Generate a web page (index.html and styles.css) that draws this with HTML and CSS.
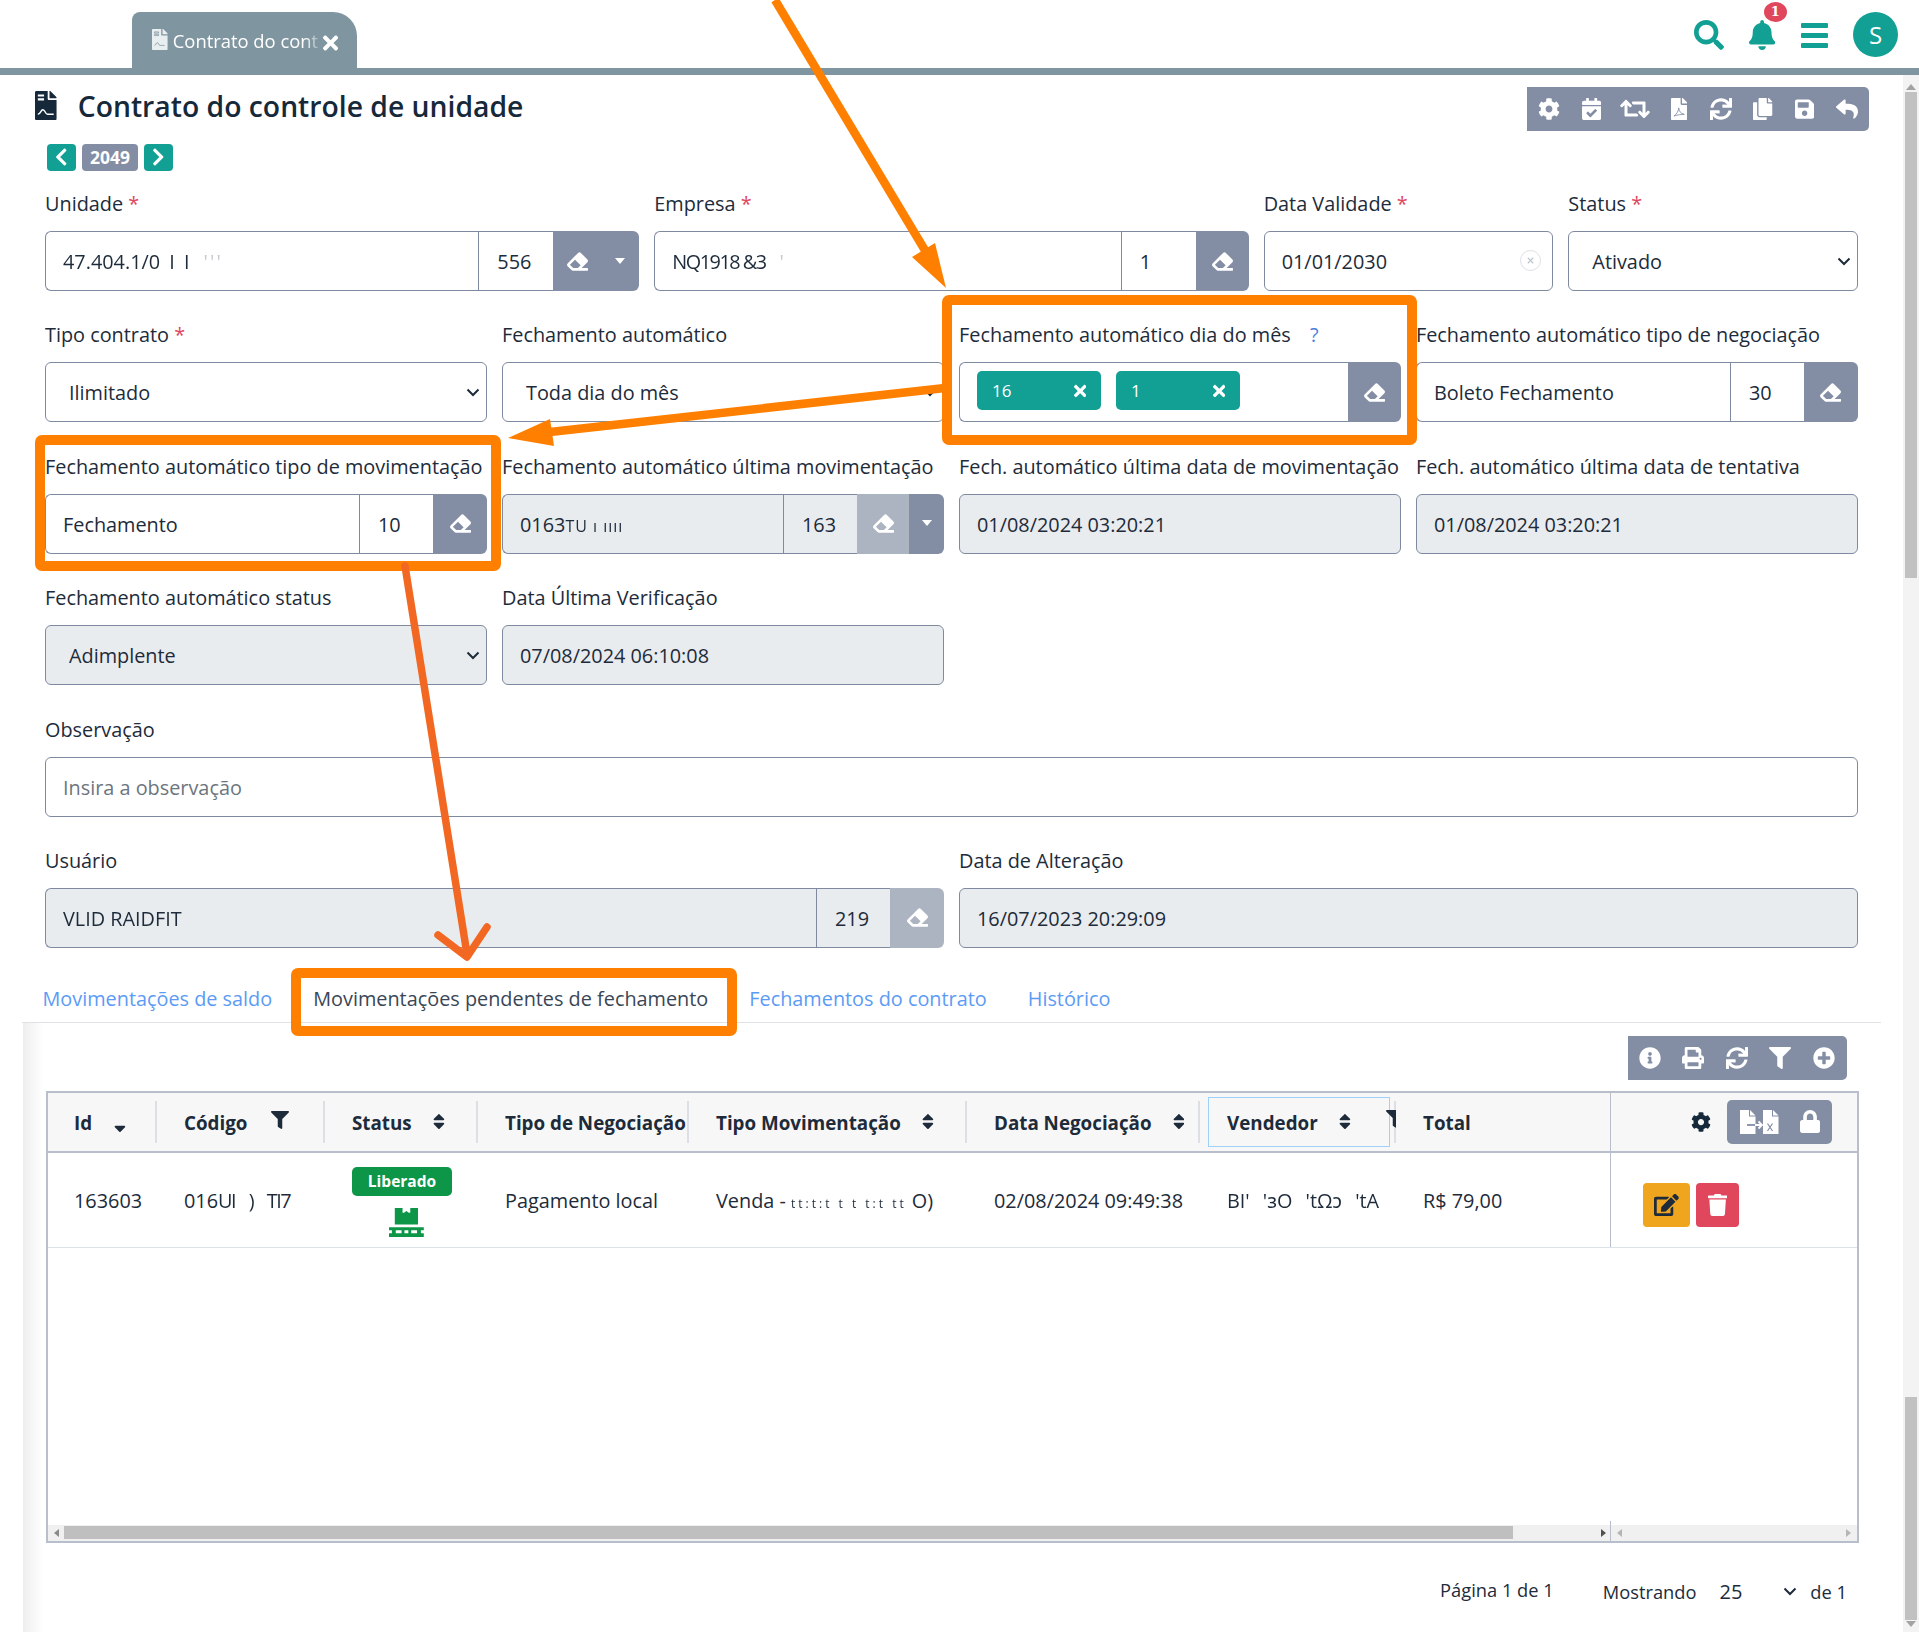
FILE: index.html
```html
<!DOCTYPE html>
<html lang="pt-BR">
<head>
<meta charset="utf-8">
<title>Contrato do controle de unidade</title>
<link rel="stylesheet" href="styles.css">
</head>
<body>
<svg class="sprite" aria-hidden="true">
  <symbol id="cog" viewBox="0 0 512 512"><path d="M487.4 315.7l-42.6-24.6c4.3-23.2 4.3-47 0-70.2l42.6-24.6c4.9-2.8 7.1-8.6 5.5-14-11.1-35.6-30-67.8-54.7-94.6-3.8-4.1-10-5.1-14.8-2.3L380.8 110c-17.9-15.4-38.5-27.3-60.8-35.1V25.8c0-5.6-3.9-10.5-9.4-11.7-36.7-8.2-74.3-7.8-109.2 0-5.5 1.2-9.4 6.1-9.4 11.7V75c-22.2 7.9-42.8 19.8-60.8 35.1L88.7 85.5c-4.9-2.8-11-1.9-14.8 2.3-24.7 26.7-43.6 58.9-54.7 94.6-1.7 5.4.6 11.2 5.5 14L67.3 221c-4.3 23.2-4.3 47 0 70.2l-42.6 24.6c-4.9 2.8-7.1 8.6-5.5 14 11.1 35.6 30 67.8 54.7 94.6 3.8 4.1 10 5.1 14.8 2.3l42.6-24.6c17.9 15.4 38.5 27.3 60.8 35.1v49.2c0 5.6 3.9 10.5 9.4 11.7 36.7 8.2 74.3 7.8 109.2 0 5.5-1.2 9.4-6.1 9.4-11.7v-49.2c22.2-7.9 42.8-19.8 60.8-35.1l42.6 24.6c4.9 2.8 11 1.9 14.8-2.3 24.7-26.7 43.6-58.9 54.7-94.6 1.5-5.5-.7-11.3-5.6-14.1zM256 336c-44.1 0-80-35.9-80-80s35.9-80 80-80 80 35.9 80 80-35.9 80-80 80z"/></symbol>
  <symbol id="sync" viewBox="0 0 512 512"><path d="M440.65 12.57l4 82.77A247.16 247.16 0 0 0 255.83 8C134.73 8 33.91 94.92 12.29 209.82A12 12 0 0 0 24.09 224h49.05a12 12 0 0 0 11.67-9.26 175.91 175.91 0 0 1 317-56.94l-101.46-4.86a12 12 0 0 0-12.57 12v47.41a12 12 0 0 0 12 12H500a12 12 0 0 0 12-12V12a12 12 0 0 0-12-12h-47.37a12 12 0 0 0-11.98 12.57zM255.83 432a175.61 175.61 0 0 1-146-77.8l101.8 4.87a12 12 0 0 0 12.57-12v-47.4a12 12 0 0 0-12-12H12a12 12 0 0 0-12 12V500a12 12 0 0 0 12 12h47.35a12 12 0 0 0 12-12.6l-4.15-82.57A247.17 247.17 0 0 0 255.83 504c121.11 0 221.93-86.92 243.55-201.82a12 12 0 0 0-11.8-14.18h-49.05a12 12 0 0 0-11.67 9.26A175.86 175.86 0 0 1 255.83 432z"/></symbol>
  <symbol id="eraser" viewBox="0 0 512 512"><path d="M497.941 273.941c18.745-18.745 18.745-49.137 0-67.882l-160-160c-18.745-18.745-49.136-18.746-67.883 0l-256 256c-18.745 18.745-18.745 49.137 0 67.882l96 96A48.004 48.004 0 0 0 144 480h356c6.627 0 12-5.373 12-12v-40c0-6.627-5.373-12-12-12H355.883l142.058-142.059zm-302.627-62.627l137.373 137.373L265.373 416H150.628l-80-80 124.686-124.686z"/></symbol>
  <symbol id="filter" viewBox="0 0 512 512"><path d="M487.976 0H24.028C2.71 0-8.047 25.866 7.058 40.971L192 225.941V432c0 7.831 3.821 15.17 10.237 19.662l80 55.98C298.02 518.69 320 507.493 320 487.98V225.941l184.947-184.97C520.021 25.896 509.338 0 487.976 0z"/></symbol>
  <symbol id="sort" viewBox="0 0 320 512"><path d="M41 288h238c21.4 0 32.1 25.9 17 41L177 448c-9.4 9.4-24.6 9.4-33.9 0L24 329c-15.1-15.1-4.4-41 17-41zm255-105L177 64c-9.4-9.4-24.6-9.4-33.9 0L24 183c-15.1 15.1-4.4 41 17 41h238c21.4 0 32.1-25.9 17-41z"/></symbol>
  <symbol id="times" viewBox="0 0 352 512"><path d="M242.72 256l100.07-100.07c12.28-12.28 12.28-32.19 0-44.48l-22.24-22.24c-12.28-12.28-32.19-12.28-44.48 0L176 189.28 75.93 89.21c-12.28-12.28-32.19-12.28-44.48 0L9.21 111.45c-12.28 12.28-12.28 32.19 0 44.48L109.28 256 9.21 356.07c-12.28 12.28-12.28 32.19 0 44.48l22.24 22.24c12.28 12.28 32.2 12.28 44.48 0L176 322.72l100.07 100.07c12.28 12.28 32.2 12.28 44.48 0l22.24-22.24c12.28-12.28 12.28-32.19 0-44.48L242.72 256z"/></symbol>
  <symbol id="file" viewBox="0 0 384 512"><path d="M224 136V0H24C10.7 0 0 10.7 0 24v464c0 13.3 10.7 24 24 24h336c13.3 0 24-10.7 24-24V160H248c-13.2 0-24-10.8-24-24zm160-14.1v6.1H256V0h6.1c6.4 0 12.5 2.5 17 7l97.9 98c4.5 4.5 7 10.6 7 16.9z"/></symbol>
  <symbol id="chev" viewBox="0 0 14 9"><path d="M1.5 1.5L7 7l5.5-5.5"/></symbol>
</svg>

<header class="topbar">
  <div class="tab-main">
    <svg class="tab-file" viewBox="0 0 384 512"><use href="#file"/><path class="mark" d="M60 70h100v30H60zM60 130h100v30H60zM60 400c40 0 40-70 70-70s30 70 60 70h120"/></svg>
    <span class="tab-title">Contrato do cont</span>
    <svg class="tab-close" viewBox="0 0 352 512"><use href="#times"/></svg>
  </div>
  <div class="top-icons">
    <svg class="ti-search" viewBox="0 0 512 512"><path d="M505 442.7L405.3 343c-4.5-4.5-10.6-7-17-7H372c27.6-35.3 44-79.7 44-128C416 93.1 322.9 0 208 0S0 93.1 0 208s93.1 208 208 208c48.3 0 92.7-16.4 128-44v16.3c0 6.4 2.5 12.5 7 17l99.7 99.7c9.4 9.4 24.6 9.4 33.9 0l28.3-28.3c9.4-9.4 9.4-24.6.1-34zM208 336c-70.7 0-128-57.2-128-128 0-70.7 57.2-128 128-128 70.7 0 128 57.2 128 128 0 70.7-57.2 128-128 128z"/></svg>
    <div class="bell-wrap">
      <svg class="ti-bell" viewBox="0 0 448 512"><path d="M224 512c35.32 0 63.97-28.65 63.97-64H160.03c0 35.35 28.65 64 63.97 64zm215.39-149.71c-19.32-20.76-55.47-51.99-55.47-154.29 0-77.7-54.48-139.9-127.94-155.16V32c0-17.67-14.32-32-31.98-32s-31.98 14.33-31.98 32v20.84C118.56 68.1 64.08 130.3 64.08 208c0 102.3-36.15 133.53-55.47 154.29-6 6.45-8.66 14.16-8.61 21.71.11 16.4 12.98 32 32.1 32h383.8c19.12 0 32-15.6 32.1-32 .05-7.55-2.61-15.27-8.61-21.71z"/></svg>
      <span class="bell-badge">1</span>
    </div>
    <div class="bars"><i></i><i></i><i></i></div>
    <div class="avatar">S</div>
  </div>
</header>

<div class="shell">
  <main class="content">
    <div class="title-row">
      <h1 class="title">
        <svg class="title-icon" viewBox="0 0 384 512"><use href="#file"/><path class="mark-w" d="M50 60h110v36H50zM50 130h110v36H50z"/><path class="mark-s" d="M50 410c50 0 50-80 90-80s40 80 80 80h110"/></svg>
        <span class="title-text">Contrato do controle de unidade</span>
      </h1>
      <div class="toolbar top">
        <span class="tb"><svg class="h22" viewBox="0 0 512 512"><use href="#cog"/></svg></span>
        <span class="tb"><svg class="h22" viewBox="0 0 448 512"><path d="M436 160H12c-6.627 0-12-5.373-12-12v-36c0-26.51 21.49-48 48-48h48V12c0-6.627 5.373-12 12-12h40c6.627 0 12 5.373 12 12v52h128V12c0-6.627 5.373-12 12-12h40c6.627 0 12 5.373 12 12v52h48c26.51 0 48 21.49 48 48v36c0 6.627-5.373 12-12 12zM12 192h424c6.627 0 12 5.373 12 12v260c0 26.51-21.49 48-48 48H48c-26.51 0-48-21.49-48-48V204c0-6.627 5.373-12 12-12zm333.296 95.947l-28.169-28.398c-4.667-4.705-12.265-4.736-16.970-.068L194.12 364.665l-45.98-46.352c-4.667-4.705-12.266-4.736-16.971-.068l-28.397 28.17c-4.705 4.667-4.736 12.265-.068 16.970l82.601 83.269c4.667 4.705 12.265 4.736 16.97.068l142.953-141.805c4.705-4.667 4.736-12.265.068-16.970z"/></svg></span>
        <span class="tb wide"><svg class="h24" viewBox="0 0 640 512"><path d="M629.657 343.598L528.971 444.284c-9.373 9.372-24.568 9.372-33.941 0L394.343 343.598c-9.373-9.373-9.373-24.569 0-33.941l10.823-10.823c9.562-9.562 25.133-9.34 34.419.492L480 342.118V160H292.451a24.005 24.005 0 0 1-16.971-7.029l-16-16C244.361 121.851 255.069 96 276.451 96H520c13.255 0 24 10.745 24 24v222.118l40.416-42.792c9.285-9.831 24.856-10.054 34.419-.492l10.823 10.823c9.372 9.372 9.372 24.569-.001 33.941zm-265.138 15.431A23.999 23.999 0 0 0 347.548 352H160V169.881l40.416 42.792c9.286 9.831 24.856 10.054 34.419.491l10.822-10.822c9.373-9.373 9.373-24.569 0-33.941L144.971 67.716c-9.373-9.373-24.569-9.373-33.941 0L10.343 168.402c-9.373 9.373-9.373 24.569 0 33.941l10.822 10.822c9.562 9.562 25.133 9.34 34.419-.491L96 169.881V392c0 13.255 10.745 24 24 24h243.549c21.382 0 32.09-25.851 16.971-40.971l-16.001-16z"/></svg></span>
        <span class="tb mid"><svg class="h22" viewBox="0 0 384 512"><use href="#file"/><path class="pdf" d="M70 420c60-40 110-130 110-190 0 70 50 140 130 150-70 0-150 10-240 40z"/></svg></span>
        <span class="tb"><svg class="h22" viewBox="0 0 512 512"><use href="#sync"/></svg></span>
        <span class="tb"><svg class="h22" viewBox="0 0 448 512"><path d="M320 448v40c0 13.255-10.745 24-24 24H24c-13.255 0-24-10.745-24-24V120c0-13.255 10.745-24 24-24h72v296c0 30.879 25.121 56 56 56h168zm0-344V0H152c-13.255 0-24 10.745-24 24v368c0 13.255 10.745 24 24 24h272c13.255 0 24-10.745 24-24V128H344c-13.2 0-24-10.8-24-24zm120.971-31.029L375.029 7.029A24 24 0 0 0 358.059 0H352v96h96v-6.059a24 24 0 0 0-7.029-16.97z"/></svg></span>
        <span class="tb"><svg class="h22" viewBox="0 0 448 512"><path d="M433.941 129.941l-83.882-83.882A48 48 0 0 0 316.118 32H48C21.49 32 0 53.49 0 80v352c0 26.51 21.49 48 48 48h352c26.51 0 48-21.49 48-48V163.882a48 48 0 0 0-14.059-33.941zM224 416c-35.346 0-64-28.654-64-64 0-35.346 28.654-64 64-64s64 28.654 64 64c0 35.346-28.654 64-64 64zm96-304.52V212c0 6.627-5.373 12-12 12H76c-6.627 0-12-5.373-12-12V108c0-6.627 5.373-12 12-12h228.52c3.183 0 6.235 1.264 8.485 3.515l3.48 3.48A11.996 11.996 0 0 1 320 111.48z"/></svg></span>
        <span class="tb"><svg class="h22" viewBox="0 0 512 512"><path d="M8.309 189.836L184.313 37.851C199.719 24.546 224 35.347 224 56.015v80.053c160.629 1.839 288 34.032 288 186.258 0 61.441-39.581 122.309-83.333 154.132-13.653 9.931-33.111-2.533-28.077-18.631 45.344-145.012-21.507-183.51-176.59-185.742V360c0 20.7-24.3 31.453-39.687 18.164l-176.004-152c-11.071-9.562-11.086-26.753 0-36.328z"/></svg></span>
      </div>
    </div>

    <div class="pager">
      <span class="pg-btn"><svg class="h20" viewBox="0 0 320 512"><path d="M34.52 239.03L228.87 44.69c9.37-9.37 24.57-9.37 33.94 0l22.67 22.67c9.36 9.36 9.37 24.52.04 33.9L131.49 256l154.02 154.75c9.34 9.38 9.32 24.54-.04 33.9l-22.67 22.67c-9.37 9.37-24.57 9.37-33.94 0L34.52 272.97c-9.37-9.37-9.37-24.57 0-33.94z"/></svg></span>
      <span class="pg-num">2049</span>
      <span class="pg-btn"><svg class="h20" viewBox="0 0 320 512"><path d="M285.476 272.971L91.132 467.314c-9.373 9.373-24.569 9.373-33.941 0l-22.667-22.667c-9.357-9.357-9.375-24.522-.04-33.901L188.505 256 34.484 101.255c-9.335-9.379-9.317-24.544.04-33.901l22.667-22.667c9.373-9.373 24.569-9.373 33.941 0L285.475 239.03c9.373 9.372 9.373 24.568.001 33.941z"/></svg></span>
    </div>

    <form class="form">
      <div class="field c4">
        <label>Unidade <b>*</b></label>
        <div class="group">
          <div class="ctl grow"><span class="smudge open">47.404.1/0 I I</span><span class="smudge faint">' ' '</span></div>
          <div class="ctl code w75">556</div>
          <span class="btn w48"><svg class="er" viewBox="0 0 512 512"><use href="#eraser"/></svg></span>
          <span class="btn caret-btn w38 end"><i class="caret"></i></span>
        </div>
      </div>
      <div class="field c4">
        <label>Empresa <b>*</b></label>
        <div class="group">
          <div class="ctl grow"><span class="smudge">NQ1918 &amp;3</span><span class="smudge faint">'</span></div>
          <div class="ctl code w75">1</div>
          <span class="btn w53 end"><svg class="er" viewBox="0 0 512 512"><use href="#eraser"/></svg></span>
        </div>
      </div>
      <div class="field c2">
        <label>Data Validade <b>*</b></label>
        <div class="ctl alone date">01/01/2030<span class="clear"><svg viewBox="0 0 12 12"><path d="M3 3l6 6M9 3l-6 6"/></svg></span></div>
      </div>
      <div class="field c2">
        <label>Status <b>*</b></label>
        <div class="selwrap"><select class="sel"><option>Ativado</option></select><svg class="chev" viewBox="0 0 14 9"><use href="#chev"/></svg></div>
      </div>

      <div class="field c3">
        <label>Tipo contrato <b>*</b></label>
        <div class="selwrap"><select class="sel"><option>Ilimitado</option></select><svg class="chev" viewBox="0 0 14 9"><use href="#chev"/></svg></div>
      </div>
      <div class="field c3">
        <label>Fechamento automático</label>
        <div class="selwrap"><select class="sel"><option>Toda dia do mês</option></select><svg class="chev" viewBox="0 0 14 9"><use href="#chev"/></svg></div>
      </div>
      <div class="field c3">
        <label>Fechamento automático dia do mês <em>?</em></label>
        <div class="group">
          <div class="ctl grow chips">
            <span class="chip">16<svg viewBox="0 0 352 512"><use href="#times"/></svg></span>
            <span class="chip">1<svg viewBox="0 0 352 512"><use href="#times"/></svg></span>
          </div>
          <span class="btn w53 end"><svg class="er" viewBox="0 0 512 512"><use href="#eraser"/></svg></span>
        </div>
      </div>
      <div class="field c3">
        <label>Fechamento automático tipo de negociação</label>
        <div class="group">
          <div class="ctl grow">Boleto Fechamento</div>
          <div class="ctl code w74">30</div>
          <span class="btn w54 end"><svg class="er" viewBox="0 0 512 512"><use href="#eraser"/></svg></span>
        </div>
      </div>

      <div class="field c3">
        <label>Fechamento automático tipo de movimentação</label>
        <div class="group">
          <div class="ctl grow">Fechamento</div>
          <div class="ctl code w74">10</div>
          <span class="btn w54 end"><svg class="er" viewBox="0 0 512 512"><use href="#eraser"/></svg></span>
        </div>
      </div>
      <div class="field c3">
        <label>Fechamento automático última movimentação</label>
        <div class="group off">
          <div class="ctl grow">0163<span class="smudge short">TU ı ıııı</span></div>
          <div class="ctl code w74">163</div>
          <span class="btn dim w52"><svg class="er" viewBox="0 0 512 512"><use href="#eraser"/></svg></span>
          <span class="btn caret-btn w35 end"><i class="caret"></i></span>
        </div>
      </div>
      <div class="field c3">
        <label>Fech. automático última data de movimentação</label>
        <div class="ctl alone off">01/08/2024 03:20:21</div>
      </div>
      <div class="field c3">
        <label>Fech. automático última data de tentativa</label>
        <div class="ctl alone off">01/08/2024 03:20:21</div>
      </div>

      <div class="field c3">
        <label>Fechamento automático status</label>
        <div class="selwrap"><select class="sel off"><option>Adimplente</option></select><svg class="chev" viewBox="0 0 14 9"><use href="#chev"/></svg></div>
      </div>
      <div class="field c3">
        <label>Data Última Verificação</label>
        <div class="ctl alone off">07/08/2024 06:10:08</div>
      </div>
      <div class="field c12">
        <label>Observação</label>
        <div class="ctl alone ph">Insira a observação</div>
      </div>
      <div class="field c6">
        <label>Usuário</label>
        <div class="group off">
          <div class="ctl grow"><span class="smudge tight">VLID RAIDFIT</span></div>
          <div class="ctl code w74">219</div>
          <span class="btn dim w54 end"><svg class="er" viewBox="0 0 512 512"><use href="#eraser"/></svg></span>
        </div>
      </div>
      <div class="field c6">
        <label>Data de Alteração</label>
        <div class="ctl alone off">16/07/2023 20:29:09</div>
      </div>
    </form>

    <nav class="tabs">
      <a>Movimentações de saldo</a>
      <a class="active">Movimentações pendentes de fechamento</a>
      <a>Fechamentos do contrato</a>
      <a>Histórico</a>
    </nav>

    <section class="panel">
      <div class="toolbar sub">
        <span class="tb2"><svg class="h22" viewBox="0 0 512 512"><path d="M256 8C119.043 8 8 119.083 8 256c0 136.997 111.043 248 248 248s248-111.003 248-248C504 119.083 392.957 8 256 8zm0 110c23.196 0 42 18.804 42 42s-18.804 42-42 42-42-18.804-42-42 18.804-42 42-42zm56 254c0 6.627-5.373 12-12 12h-88c-6.627 0-12-5.373-12-12v-24c0-6.627 5.373-12 12-12h12v-64h-12c-6.627 0-12-5.373-12-12v-24c0-6.627 5.373-12 12-12h64c6.627 0 12 5.373 12 12v100h12c6.627 0 12 5.373 12 12v24z"/></svg></span>
        <span class="tb2"><svg class="h22" viewBox="0 0 512 512"><path d="M448 192V77.25c0-8.49-3.37-16.62-9.37-22.63L393.37 9.37c-6-6-14.14-9.37-22.63-9.37H96C78.33 0 64 14.33 64 32v160c-35.35 0-64 28.65-64 64v112c0 8.84 7.16 16 16 16h48v96c0 17.67 14.33 32 32 32h320c17.67 0 32-14.33 32-32v-96h48c8.84 0 16-7.16 16-16V256c0-35.35-28.65-64-64-64zm-64 256H128v-96h256v96zm0-224H128V64h192v48c0 8.84 7.16 16 16 16h48v96zm48 72c-13.25 0-24-10.75-24-24 0-13.26 10.75-24 24-24s24 10.74 24 24c0 13.25-10.75 24-24 24z"/></svg></span>
        <span class="tb2"><svg class="h22" viewBox="0 0 512 512"><use href="#sync"/></svg></span>
        <span class="tb2"><svg class="h22" viewBox="0 0 512 512"><use href="#filter"/></svg></span>
        <span class="tb2"><svg class="h22" viewBox="0 0 512 512"><path d="M256 8C119 8 8 119 8 256s111 248 248 248 248-111 248-248S393 8 256 8zm144 276c0 6.6-5.4 12-12 12h-92v92c0 6.6-5.4 12-12 12h-56c-6.6 0-12-5.4-12-12v-92h-92c-6.6 0-12-5.4-12-12v-56c0-6.6 5.4-12 12-12h92v-92c0-6.6 5.4-12 12-12h56c6.6 0 12 5.4 12 12v92h92c6.6 0 12 5.4 12 12v56z"/></svg></span>
      </div>

      <div class="grid-table">
        <div class="tr head">
          <div class="th first">Id<svg class="s-down" viewBox="0 0 320 512"><path d="M41 288h238c21.4 0 32.1 25.9 17 41L177 448c-9.4 9.4-24.6 9.4-33.9 0L24 329c-15.1-15.1-4.4-41 17-41z"/></svg></div>
          <div class="th">Código<svg class="f-ic" viewBox="0 0 512 512"><use href="#filter"/></svg></div>
          <div class="th">Status<svg class="s-ic" viewBox="0 0 320 512"><use href="#sort"/></svg></div>
          <div class="th">Tipo de Negociação</div>
          <div class="th">Tipo Movimentação<svg class="s-ic" viewBox="0 0 320 512"><use href="#sort"/></svg></div>
          <div class="th">Data Negociação<svg class="s-ic" viewBox="0 0 320 512"><use href="#sort"/></svg></div>
          <div class="th focus"><span class="focus-box"></span>Vendedor<svg class="s-ic" viewBox="0 0 320 512"><use href="#sort"/></svg><svg class="f-cut" viewBox="0 0 280 512"><path d="M487.976 0H24.028C2.71 0-8.047 25.866 7.058 40.971L192 225.941V432c0 7.831 3.821 15.17 10.237 19.662l80 55.98C298.02 518.69 320 507.493 320 487.98V225.941l184.947-184.97C520.021 25.896 509.338 0 487.976 0z"/></svg></div>
          <div class="th last">Total</div>
          <div class="th-act">
            <svg class="h20 dark" viewBox="0 0 512 512"><use href="#cog"/></svg>
            <span class="act-group">
              <svg class="xfer" viewBox="0 0 42 24">
                <path d="M1 0h9v6.5h6.5V24H1z"/><path d="M11 0l5.5 5.500H11z"/>
                <path d="M24 0h9v6.500h6.500V24H24z"/><path d="M34 0l5.500 5.500H34z"/>
                <path class="xfer-a" d="M8 15h8"/><path class="xfer-b" d="M16 15h6M19.500 11.500L23 15l-3.500 3.500"/>
                <path class="xfer-x" d="M28.500 13.500l5 7.500M33.500 13.500l-5 7.500"/>
              </svg>
              <svg class="h23 lock" viewBox="0 0 448 512"><path d="M400 224h-24v-72C376 68.2 307.8 0 224 0S72 68.2 72 152v72H48c-26.5 0-48 21.5-48 48v192c0 26.5 21.5 48 48 48h352c26.5 0 48-21.5 48-48V272c0-26.5-21.5-48-48-48zm-104 0H152v-72c0-39.7 32.3-72 72-72s72 32.3 72 72v72z"/></svg>
            </span>
          </div>
        </div>
        <div class="tr row">
          <div class="td first">163603</div>
          <div class="td">016<span class="smudge gap">UI ) TI</span>7</div>
          <div class="td status">
            <span class="badge">Liberado</span>
            <svg class="pallet" viewBox="0 0 36 30"><path d="M6 0h8v5h1.5l2.5-2 2.5 2H22V0h8v17H6zM0 20h36v3h-3v3h3v4H0v-4h3v-3H0zm7 3v3h6v-3zm9 0v3h4v-3zm7 0v3h6v-3z"/></svg>
          </div>
          <div class="td">Pagamento local</div>
          <div class="td">Venda - <span class="smudge small">tt:t:t t t t:t tt</span> O)</div>
          <div class="td">02/08/2024 09:49:38</div>
          <div class="td"><span class="smudge gapwide">BI' 'ɜO 'tΩɔ 'tA</span></div>
          <div class="td">R$ 79,00</div>
          <div class="td-act">
            <span class="act edit"><svg viewBox="0 0 576 512"><path d="M402.6 83.2l90.2 90.2c3.8 3.8 3.8 10 0 13.8L274.4 405.6l-92.8 10.3c-12.4 1.4-22.9-9.1-21.5-21.5l10.3-92.8L388.8 83.2c3.8-3.8 10-3.8 13.8 0zm162-22.9l-48.8-48.8c-15.2-15.2-39.9-15.2-55.2 0l-35.4 35.4c-3.8 3.8-3.8 10 0 13.8l90.2 90.2c3.8 3.8 10 3.8 13.8 0l35.4-35.4c15.2-15.3 15.2-40 0-55.2zM384 346.2V448H64V128h229.8c3.2 0 6.2-1.3 8.5-3.5l40-40c7.6-7.6 2.2-20.5-8.5-20.5H48C21.5 64 0 85.5 0 112v352c0 26.5 21.5 48 48 48h352c26.5 0 48-21.5 48-48V306.2c0-10.7-12.9-16-20.5-8.5l-40 40c-2.2 2.3-3.5 5.3-3.5 8.5z"/></svg></span>
            <span class="act del"><svg viewBox="0 0 448 512"><path d="M432 32H312l-9.4-18.7A24 24 0 0 0 281.1 0H166.8a23.72 23.72 0 0 0-21.4 13.3L136 32H16A16 16 0 0 0 0 48v32a16 16 0 0 0 16 16h416a16 16 0 0 0 16-16V48a16 16 0 0 0-16-16zM53.2 467a48 48 0 0 0 47.9 45h245.8a48 48 0 0 0 47.9-45L416 128H32z"/></svg></span>
          </div>
        </div>
        <div class="tbody-fill"></div>
        <div class="hscroll">
          <div class="hs-main"><i class="ar l"></i><span class="hs-thumb"></span><i class="ar r"></i></div>
          <div class="hs-side"><i class="ar l soft"></i><i class="ar r soft"></i></div>
        </div>
      </div>

      <div class="foot">
        <span class="foot-page">Página 1 de 1</span>
        <span class="foot-show">Mostrando</span>
        <span class="foot-num">25</span>
        <svg class="foot-chev" viewBox="0 0 14 9"><use href="#chev"/></svg>
        <span>de 1</span>
      </div>
    </section>
  </main>

  <aside class="vscroll">
    <i class="v-up"></i>
    <span class="v-thumb one"></span>
    <span class="v-gap"></span>
    <span class="v-thumb two"></span>
    <i class="v-down"></i>
  </aside>
</div>

<svg class="notes" viewBox="0 0 1919 1632" aria-hidden="true">
  <rect class="note-box" x="947" y="300" width="465" height="140" rx="2"/>
  <rect class="note-box" x="40" y="440" width="456" height="126" rx="2"/>
  <rect class="note-box" x="296" y="973" width="436" height="58" rx="2"/>
  <path class="note-line" d="M775 0L926 252"/>
  <path class="note-head" d="M946 288L912 257L935 243z"/>
  <path class="note-line" d="M945 388L550 432"/>
  <path class="note-head" d="M508 438L550 419L554 446z"/>
  <path class="note-red" d="M405 566L467 954M438 935L467 957L487 927"/>
</svg>
</body>
</html>
```
FILE: styles.css
```css
* { box-sizing: border-box; }
html, body { margin: 0; padding: 0; }
body {
  position: relative;
  width: 1919px;
  height: 1632px;
  overflow: hidden;
  background: #fff;
  font-family: "Open Sans", "Noto Sans", "Liberation Sans", sans-serif;
  font-size: 19.85px;
  color: #1d2b3a;
}
.sprite { display: none; }
svg { fill: currentColor; display: block; height: 22px; flex: none; }
.h16 { height: 16px; }
.h20 { height: 20px; }
.h22 { height: 22px; }
.h23 { height: 23px; }
.h24 { height: 24px; }
.h25 { height: 25px; }

/* Top bar */
.topbar {
  height: 75px;
  display: flex;
  justify-content: space-between;
  padding-left: 132px;
  border-bottom: 7px solid #7f95a0;
}
.tab-main {
  width: 225px;
  margin-top: 12px;
  background: #7f95a0;
  border-radius: 8px 24px 0 0;
  color: #fff;
  display: flex;
  align-items: center;
  padding: 0 0 0 20px;
}
.tab-file { height: 21px; color: #e9eef0; margin-right: 5px; margin-top: -2px; }
.tab-file .mark { fill: none; stroke: #7f95a0; stroke-width: 18; }
.tab-title {
  width: 150px;
  overflow: hidden;
  white-space: nowrap;
  font-size: 18.4px;
  -webkit-mask-image: linear-gradient(to right, #000 88%, transparent);
  mask-image: linear-gradient(to right, #000 88%, transparent);
  margin-top: 1px;
}
.tab-close { height: 22px; margin-top: 5px; color: #fff; }
.top-icons {
  display: flex;
  align-items: flex-start;
  color: #12a094;
  padding-right: 21px;
}
.ti-search { height: 30px; margin-top: 20px; margin-right: 25px; }
.bell-wrap { position: relative; margin-top: 20px; margin-right: 26px; }
.ti-bell { height: 30px; }
.bell-badge {
  position: absolute;
  top: -18px;
  left: 15px;
  width: 23px;
  height: 20px;
  border-radius: 50%;
  background: #e0465c;
  color: #fff;
  font: bold 13px/20px "DejaVu Serif", serif;
  text-align: center;
}
.bars { margin-top: 23px; width: 27px; margin-right: 25px; display: flex; flex-direction: column; gap: 5.500px; }
.bars i { display: block; height: 4.600px; background: #12a094; border-radius: 1px; }
.avatar {
  margin-top: 12px;
  width: 45px;
  height: 45px;
  border-radius: 50%;
  background: #12a094;
  color: #fff;
  font-size: 24px;
  line-height: 45px;
  text-align: center;
}

/* Shell */
.shell { display: flex; height: 1557px; }
.content { width: 1903px; padding: 0 45px; }
.vscroll {
  width: 16px;
  background: #f3f3f3;
  display: flex;
  flex-direction: column;
  align-items: center;
}
.v-up, .v-down { display: block; width: 0; height: 0; border: 5px solid transparent; }
.v-up { border-bottom: 6px solid #a3a3a3; margin: 4px 0 2px; }
.v-down { border-top: 6px solid #a3a3a3; margin: 1px 0 0; }
.v-thumb { display: block; width: 12px; background: #c1c1c1; }
.v-thumb.one { height: 486px; }
.v-thumb.two { height: 223px; }
.v-gap { flex: 1; }

/* Title */
.title-row {
  display: flex;
  justify-content: space-between;
  align-items: center;
  margin: 12px -11px 0 -10px;
  height: 44px;
}
.title {
  margin: 0;
  display: flex;
  align-items: flex-start;
  font-size: 28.3px;
  font-weight: 600;
  color: #16293a;
  height: 44px;
}
.title-icon { height: 29px; margin-right: 21px; margin-top: 4px; color: #16293a; }
.title-text { line-height: 38px; }
.mark-w { fill: #fff; }
.mark-s { fill: none; stroke: #fff; stroke-width: 26; }
.toolbar {
  background: #838ea5;
  color: #fff;
  display: flex;
  align-items: center;
  border-radius: 0 5px 5px 0;
  height: 44px;
}
.toolbar.top { width: 342px; padding: 0 1.500px; }
.tb { width: 42px; display: flex; justify-content: center; }
.tb.wide { width: 46px; }
.tb.mid { width: 43px; }
.tb .pdf { fill: none; stroke: #838ea5; stroke-width: 20; }

/* Pager */
.pager { display: flex; align-items: center; gap: 6px; margin: 12px 0 18px 2px; height: 28px; }
.pg-btn {
  width: 29px;
  height: 27px;
  background: #12a094;
  color: #fff;
  border-radius: 4px;
  display: flex;
  align-items: center;
  justify-content: center;
}
.pg-num {
  width: 56px;
  height: 27px;
  background: #838ea5;
  color: #fff;
  border-radius: 4px;
  font-weight: 700;
  font-size: 17.500px;
  line-height: 26px;
  text-align: center;
}

/* Form */
.form {
  display: grid;
  grid-template-columns: repeat(12, 1fr);
  column-gap: 15px;
  row-gap: 29.4px;
}
.c2 { grid-column: span 2; }
.c3 { grid-column: span 3; }
.c4 { grid-column: span 4; }
.c6 { grid-column: span 6; }
.c12 { grid-column: span 12; }
.field { min-width: 0; }
.field label { display: block; height: 28px; line-height: 29.500px; margin-bottom: 14px; white-space: nowrap; color: #1d2b3a; }
.field label b { color: #e0465c; font-weight: 400; }
.field label em { color: #4a7fe0; font-style: normal; margin-left: 14px; }
.group { display: flex; height: 60px; }
.ctl {
  height: 60px;
  border: 1px solid #7f8aa0;
  background: #fff;
  padding: 0 17px;
  line-height: 59px;
  white-space: nowrap;
  overflow: hidden;
  color: #1d2b3a;
}
.alone { border-radius: 6px; position: relative; }
.grow { flex: 1; min-width: 0; border-radius: 6px 0 0 6px; border-right: 0; }
.code { flex: none; border-right: 0; padding: 0 18px; }
.w73 { width: 73px; }
.w74 { width: 74px; }
.w75 { width: 75px; }
.w48 { width: 48px; }
.w38 { width: 38px; }
.w53 { width: 53px; }
.w54 { width: 54px; }
.w52 { width: 52px; }
.w35 { width: 35px; }
.off .ctl, .ctl.off, .sel.off { background-color: #e9ecef; }
.ph { color: #6c757d; }
.btn {
  flex: none;
  background: #838ea5;
  color: #fff;
  display: flex;
  align-items: center;
  justify-content: center;
}
.btn.end { border-radius: 0 6px 6px 0; }
.btn.dim { background: #adb4c1; }
.er { height: 21px; }
.caret { display: block; width: 0; height: 0; border: 5px solid transparent; border-top: 6px solid #fff; margin-top: 4px; }
.selwrap { position: relative; height: 60px; }
.sel {
  width: 100%;
  height: 60px;
  border: 1px solid #7f8aa0;
  border-radius: 6px;
  background-color: #fff;
  padding: 0 40px 0 23px;
  font: inherit;
  color: #1d2b3a;
  appearance: none;
  -webkit-appearance: none;
}
.chev { position: absolute; right: 7px; top: 26px; height: 9px; fill: none; stroke: #1d2b3a; stroke-width: 2; }
.date { padding-right: 40px; }
.clear {
  position: absolute;
  right: 11px;
  top: 18px;
  width: 21px;
  height: 21px;
  border: 1px solid #dcdfe3;
  border-radius: 50%;
  display: flex;
  align-items: center;
  justify-content: center;
}
.clear svg { height: 11px; fill: none; stroke: #b9c7cc; stroke-width: 1.2; }
.chips { display: flex; align-items: center; gap: 15px; padding: 0 17px; }
.chip {
  width: 124px;
  height: 39px;
  background: #12a094;
  color: #fff;
  border-radius: 5px;
  display: flex;
  align-items: center;
  justify-content: space-between;
  padding: 0 15px 0 15px;
  font-size: 17px;
  line-height: 39px;
  margin-top: -3px;
}
.chip svg { height: 18px; }
.smudge { filter: blur(.7px); letter-spacing: -1.500px; }
.smudge.open { letter-spacing: 0; word-spacing: 4px; }
.smudge.tight { letter-spacing: 0; }
.smudge.short { font-size: 16px; letter-spacing: 1px; }
.smudge.faint { opacity: .25; margin-left: 14px; }
.smudge.small { font-size: 12px; letter-spacing: 3px; }
.smudge.gap { word-spacing: 10px; }
.smudge.gapwide { letter-spacing: 0; word-spacing: 8px; }

/* Tabs */
.tabs {
  display: flex;
  margin: 27px -23px 0 -23px;
  height: 48px;
  border-bottom: 1px solid #dee2e6;
  line-height: 47px;
}
.tabs a { padding: 0 20.5px; color: #5c9bf5; white-space: nowrap; }
.tabs a.active { color: #3a4656; }

/* Panel */
.panel {
  margin: 0 -23px 0 -22px;
  padding: 13px 22px 0 23px;
  background: linear-gradient(to right, #eeeeee, #ffffff 20px);
  height: 609px;
}
.toolbar.sub {
  width: 219px;
  margin-left: auto;
  margin-right: 12px;
  padding: 0;
}
.tb2 { width: 43.500px; display: flex; justify-content: center; }
.grid-table {
  margin-top: 11px;
  width: 1813px;
  height: 452px;
  border: 2px solid #b9bfca;
  display: flex;
  flex-direction: column;
}
.tr {
  display: grid;
  grid-template-columns: 109px 168px 153px 211px 278px 233px 196px 214px 247px;
  align-items: center;
}
.head { height: 60px; border-bottom: 2px solid #b9bfca; background: #f7f7f7; font-weight: 700; font-size: 18.800px; }
.th {
  position: relative;
  height: 42px;
  display: flex;
  align-items: center;
  padding: 2px 0 0 27px;
  border-right: 2px solid #dcdfe4;
  white-space: nowrap;
  overflow: visible;
}
.th.first { padding-left: 26px; }
.th.last { border-right: 0; }
.s-ic { height: 19px; margin-left: 21px; margin-top: -3px; }
.s-down { height: 19px; margin-left: 22px; margin-top: 3px; }
.f-ic { height: 18px; margin-left: 24px; margin-top: -6px; }
.f-cut { height: 18px; position: absolute; left: 186px; top: 9px; }
.focus-box { position: absolute; left: 8px; right: 4px; top: -4px; bottom: -4px; border: 1px solid #9fd0f8; }
.th-act, .td-act { height: 100%; border-left: 1px solid #b9bfca; display: flex; align-items: center; }
.th-act { padding-left: 80px; gap: 16px; }
.dark { color: #16293a; }
.act-group {
  width: 105px;
  height: 44px;
  background: #838ea5;
  border-radius: 5px;
  color: #fff;
  display: flex;
  align-items: center;
  padding-left: 12px;
}
.xfer { height: 24px; }
.xfer-a { fill: none; stroke: #838ea5; stroke-width: 1.800; }
.xfer-b { fill: none; stroke: #fff; stroke-width: 1.800; }
.xfer-x { fill: none; stroke: #838ea5; stroke-width: 1.200; }
.lock { margin-left: 19px; }
.row { height: 95px; border-bottom: 1px solid #dde1e8; }
.td { padding: 2px 0 0 27px; white-space: nowrap; overflow: hidden; }
.td.first { padding-left: 26px; }
.status { padding: 0 0 0 27px; display: flex; flex-direction: column; align-items: flex-start; margin-top: 5px; overflow: visible; }
.badge {
  width: 100px;
  height: 29px;
  background: #0d9647;
  color: #fff;
  font-size: 15.500px;
  font-weight: 700;
  line-height: 28px;
  text-align: center;
  border-radius: 5px;
}
.pallet { height: 29px; margin: 12px 0 0 37px; color: #0d9647; }
.td-act { padding: 0 0 0 32px; gap: 6px; }
.act { height: 44px; margin-top: 10px; border-radius: 4px; display: flex; align-items: center; justify-content: center; }
.act.edit { width: 47px; background: #f0a51e; color: #1d2b3a; }
.act.del { width: 43px; background: #e0465c; color: #fff; }
.act svg { height: 22px; }
.tbody-fill { flex: 1; }
.hscroll { height: 16px; display: grid; grid-template-columns: 1562px 247px; background: #f0f0f0; }
.hs-main { display: flex; align-items: center; justify-content: space-between; padding: 0 4px 0 6px; }
.hs-thumb { display: block; width: 1449px; height: 13px; background: #bfbfbf; margin-left: 5px; margin-right: auto; }
.hs-side { display: flex; align-items: center; justify-content: space-between; padding: 4px 6px 0; border-left: 1px solid #b9bfca; height: 20px; margin-top: -4px; }
.ar { display: block; width: 0; height: 0; border: 4px solid transparent; }
.ar.l { border-left: 0; border-right: 5px solid #8a8a8a; }
.ar.r { border-right: 0; border-left: 5px solid #505050; }
.ar.soft.l { border-right-color: #b5b5b5; }
.ar.soft.r { border-left-color: #b5b5b5; }

/* Footer */
.foot {
  display: flex;
  align-items: center;
  justify-content: flex-end;
  margin-top: 35px;
  margin-right: 12px;
  font-size: 18.300px;
}
.foot-page { margin-right: 49px; margin-top: -3px; }
.foot-show { margin-right: 23px; }
.foot-num { margin-right: 41px; font-size: 20px; }
.foot-chev { height: 9px; margin-right: 13px; fill: none; stroke: #1d2b3a; stroke-width: 2; }

/* Annotations */
.notes { position: absolute; left: 0; top: 0; width: 1919px; height: 1632px; pointer-events: none; fill: none; }
.note-box { fill: none; stroke: #ff8000; stroke-width: 10; }
.note-line { stroke: #ff8000; stroke-width: 8.5; fill: none; }
.note-head { fill: #ff8000; }
.note-red { fill: none; stroke: #f26722; stroke-width: 7.5; stroke-linecap: round; stroke-linejoin: round; }
```
